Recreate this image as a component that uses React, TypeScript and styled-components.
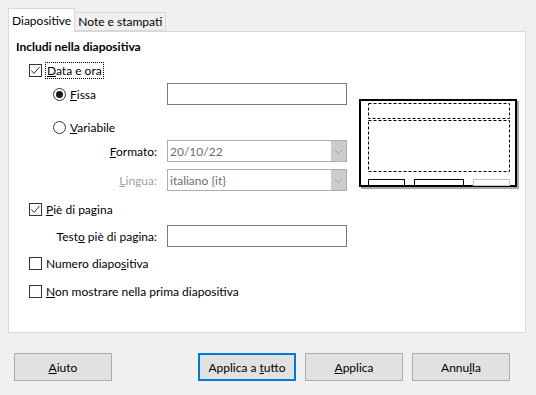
import styled, { createGlobalStyle } from 'styled-components';

const GlobalStyle = createGlobalStyle`
  html, body {
    margin: 0;
    padding: 0;
    background: #f0f0f0;
  }
  body {
    font-family: Lato, 'Noto Sans', sans-serif;
    font-size: 12px;
    color: #000;
  }
`;

export default function App() {
  return (
    <>
      <GlobalStyle />
      <Dialog>
        <TabBar>
          <Tab $active>Diapositive</Tab>
          <Tab>Note e stampati</Tab>
        </TabBar>
        <Panel>
          <FormColumn>
            <Heading>Includi nella diapositiva</Heading>
            <CheckRow $top={3}>
              <CheckBox checked />
              <FocusLabel>
                <u>D</u>ata e ora
              </FocusLabel>
            </CheckRow>
            <GridRow $top={2}>
              <RadioCell>
                <Radio checked />
                <span>
                  <u>F</u>issa
                </span>
              </RadioCell>
              <TextInput />
            </GridRow>
            <GridRow $top={11}>
              <RadioCell>
                <Radio />
                <span>
                  <u>V</u>ariabile
                </span>
              </RadioCell>
            </GridRow>
            <GridRow $top={2}>
              <FieldLabel>
                <u>F</u>ormato:
              </FieldLabel>
              <SelectBox value="20/10/22" />
            </GridRow>
            <GridRow $top={7}>
              <FieldLabel $disabled>
                <u>L</u>ingua:
              </FieldLabel>
              <SelectBox value="italiano {it}" />
            </GridRow>
            <CheckRow $top={7}>
              <CheckBox checked />
              <span>
                <u>P</u>iè di pagina
              </span>
            </CheckRow>
            <GridRow $top={5}>
              <FieldLabel>
                Test<u>o</u> piè di pagina:
              </FieldLabel>
              <TextInput />
            </GridRow>
            <CheckRow $top={5}>
              <CheckBox />
              <span>
                Numero diapo<u>s</u>itiva
              </span>
            </CheckRow>
            <CheckRow $top={6}>
              <CheckBox />
              <span>
                <u>N</u>on mostrare nella prima diapositiva
              </span>
            </CheckRow>
          </FormColumn>
          <PreviewColumn>
            <SlidePreview />
          </PreviewColumn>
        </Panel>
        <ButtonBar>
          <Button>
            <u>A</u>iuto
          </Button>
          <Spacer />
          <Button $default>
            Applica a <u>t</u>utto
          </Button>
          <Button>
            <u>A</u>pplica
          </Button>
          <Button>
            Annu<u>l</u>la
          </Button>
        </ButtonBar>
      </Dialog>
    </>
  );
}

function CheckBox({ checked }: { checked?: boolean }) {
  return (
    <Box>
      {checked && (
        <svg width="11" height="11" viewBox="0 0 11 11">
          <path d="M1.5 5.5 L4 8.5 L9.5 2" fill="none" stroke="#333" strokeWidth="1" />
        </svg>
      )}
    </Box>
  );
}

function Radio({ checked }: { checked?: boolean }) {
  return <RadioCircle>{checked && <RadioDot />}</RadioCircle>;
}

function TextInput() {
  return <InputField />;
}

function SelectBox({ value }: { value: string }) {
  return (
    <Select>
      <SelectText>{value}</SelectText>
      <SelectButton>
        <svg width="9" height="5" viewBox="0 0 9 5">
          <path d="M0.5 0.5 L4.5 4.5 L8.5 0.5" fill="none" stroke="#a8a8a8" strokeWidth="1" />
        </svg>
      </SelectButton>
    </Select>
  );
}

function SlidePreview() {
  return (
    <svg width="161" height="91" viewBox="0 0 161 91">
      <rect x="2" y="2" width="158" height="88" fill="#a8a8a8" />
      <rect x="1" y="1" width="156" height="86" fill="#fff" stroke="#000" strokeWidth="2" />
      <rect x="9.5" y="4.5" width="141" height="15" fill="none" stroke="#000" strokeDasharray="3 2" />
      <rect x="9.5" y="21.5" width="141" height="51" fill="none" stroke="#000" strokeDasharray="3 2" />
      <rect x="9.5" y="80.5" width="36" height="6" fill="none" stroke="#000" />
      <rect x="55.5" y="80.5" width="49" height="6" fill="none" stroke="#000" />
      <rect x="114.5" y="80.5" width="36" height="6" fill="none" stroke="#c4c4c4" />
    </svg>
  );
}

const Dialog = styled.div`
  width: 536px;
  height: 395px;
  display: flex;
  flex-direction: column;
  padding-top: 8px;
  box-sizing: border-box;
`;

const TabBar = styled.div`
  display: flex;
  align-items: flex-end;
  padding-left: 8px;
  height: 23px;
`;

const Tab = styled.div<{ $active?: boolean }>`
  box-sizing: border-box;
  height: ${(p) => (p.$active ? '24px' : '19px')};
  margin-bottom: ${(p) => (p.$active ? '-1px' : '0')};
  padding: ${(p) => (p.$active ? '0 3px' : '1px 3px 0')};
  display: flex;
  align-items: center;
  border: 1px solid #d9d9d9;
  border-bottom: ${(p) => (p.$active ? 'none' : '1px solid #d9d9d9')};
  border-left: ${(p) => (p.$active ? '1px solid #d9d9d9' : 'none')};
  background: ${(p) => (p.$active ? '#fff' : '#f0f0f0')};
  position: relative;
  z-index: ${(p) => (p.$active ? 1 : 0)};
  line-height: 1;
`;

const Panel = styled.div`
  margin: 0 10px 0 8px;
  height: 302px;
  box-sizing: border-box;
  background: #fff;
  border: 1px solid #d9d9d9;
  display: flex;
`;

const FormColumn = styled.div`
  width: 350px;
  display: flex;
  flex-direction: column;
  padding-top: 6px;
`;

const PreviewColumn = styled.div`
  padding-top: 67px;
`;

const Heading = styled.div`
  font-weight: bold;
  padding-left: 7px;
  height: 18px;
  line-height: 18px;
`;

const CheckRow = styled.label<{ $top: number }>`
  display: flex;
  align-items: center;
  gap: 4px;
  height: 22px;
  margin-top: ${(p) => p.$top}px;
  padding-left: 20px;
`;

const GridRow = styled.div<{ $top: number }>`
  display: grid;
  grid-template-columns: 148px 180px;
  column-gap: 10px;
  align-items: center;
  height: 22px;
  margin-top: ${(p) => p.$top}px;
`;

const RadioCell = styled.div`
  display: flex;
  align-items: center;
  gap: 4px;
  padding-left: 44px;
`;

const FieldLabel = styled.div<{ $disabled?: boolean }>`
  text-align: right;
  color: ${(p) => (p.$disabled ? '#a0a0a0' : '#000')};
`;

const FocusLabel = styled.span`
  outline: 1px dotted #000;
  outline-offset: 0;
  padding: 0 1px;
  line-height: 15px;
`;

const Box = styled.span`
  width: 13px;
  height: 13px;
  box-sizing: border-box;
  border: 1px solid #333;
  background: #fff;
  display: flex;
  align-items: center;
  justify-content: center;
  flex-shrink: 0;
`;

const RadioCircle = styled.span`
  width: 13px;
  height: 13px;
  box-sizing: border-box;
  border: 1px solid #333;
  border-radius: 50%;
  background: #fff;
  display: flex;
  align-items: center;
  justify-content: center;
  flex-shrink: 0;
`;

const RadioDot = styled.span`
  width: 7px;
  height: 7px;
  border-radius: 50%;
  background: #1a1a1a;
`;

const InputField = styled.div`
  height: 22px;
  box-sizing: border-box;
  border: 1px solid #7a7a7a;
  background: #fff;
`;

const Select = styled.div`
  height: 22px;
  box-sizing: border-box;
  border: 1px solid #adadad;
  background: #fff;
  display: flex;
  align-items: stretch;
`;

const SelectText = styled.div`
  flex: 1;
  padding-left: 2px;
  display: flex;
  align-items: center;
  color: #6d6d6d;
`;

const SelectButton = styled.div`
  width: 15px;
  background: #cccccc;
  display: flex;
  align-items: center;
  justify-content: center;
`;

const ButtonBar = styled.div`
  display: flex;
  gap: 9px;
  padding: 20px 26px 0 14px;
`;

const Spacer = styled.div`
  flex: 1;
`;

const Button = styled.button<{ $default?: boolean }>`
  width: 98px;
  height: 28px;
  box-sizing: border-box;
  background: #e1e1e1;
  border: ${(p) => (p.$default ? '2px solid #0078d7' : '1px solid #adadad')};
  font: inherit;
  color: #000;
  padding: 0;
`;
